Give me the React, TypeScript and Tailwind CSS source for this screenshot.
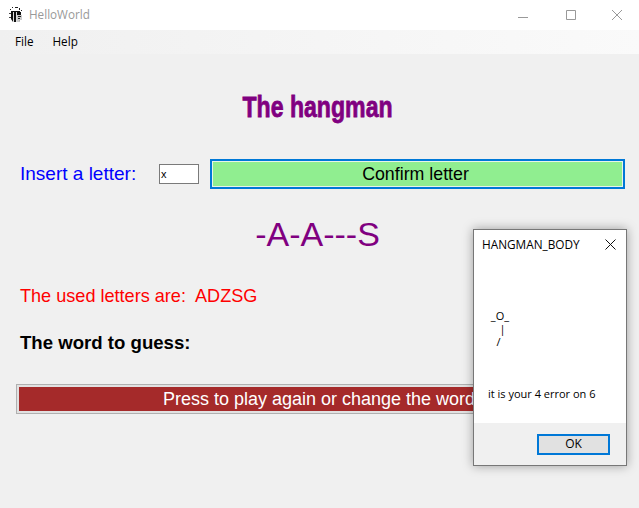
import React from 'react';

const BugIcon = () => (
  <svg width="14" height="16" viewBox="0 0 14 16" className="shrink-0">
    <path d="M3 0h1v1H3zM6 0h3v1H6zM1 2h1v1H1zM10 1h1v2h-1zM12 3h1v1h-1z" fill="#222" />
    <path d="M2 4h9v1h1v6l-2 4H4l-2-3z" fill="#111" />
    <path d="M0 6h2v1H0zM0 10h2v1H0z" fill="#444" />
    <path d="M4 5h1v10H4zM7 5h1v10H7z" fill="#ddd" />
    <path d="M8 8h5v5h-2l-1 2H8z" fill="#ccc" />
    <path d="M9 9h3v1H9zM9 11h2v1H9z" fill="#222" />
  </svg>
);

const TitleBar = () => (
  <div className="flex h-[30px] items-center bg-white pl-[9px] text-[11.7px] text-[#999]">
    <BugIcon />
    <span className="ml-[6px]">HelloWorld</span>
    <div className="ml-auto flex items-center">
      <svg width="12" height="12" viewBox="0 0 12 12" className="mr-[35px]">
        <path d="M0 8.5h10" stroke="#999" fill="none" />
      </svg>
      <svg width="12" height="12" viewBox="0 0 12 12" className="mr-[34px]">
        <path d="M1.5 1.5h9v9h-9z" stroke="#999" fill="none" />
      </svg>
      <svg width="12" height="12" viewBox="0 0 12 12" className="mr-[16px]">
        <path d="M1 1l10 10M11 1L1 11" stroke="#999" fill="none" />
      </svg>
    </div>
  </div>
);

const MenuBar = () => (
  <div className="flex h-[24px] items-center gap-[19px] bg-gradient-to-r from-[#f0f0f0] to-[#fafafa] pl-[15px] text-[11.7px] text-black">
    <span>File</span>
    <span>Help</span>
  </div>
);

const Dialog = () => (
  <div className="absolute left-[473px] top-[229px] flex h-[237px] w-[154px] flex-col border border-[#777] bg-white text-[11.8px] text-black shadow-[0_0_10px_rgba(0,0,0,0.35)]">
    <div className="flex h-[29px] items-center justify-between pl-[8px] pr-[10px]">
      <span>HANGMAN_BODY</span>
      <svg width="11" height="11" viewBox="0 0 11 11">
        <path d="M0.5 0.5l10 10M10.5 0.5l-10 10" stroke="#111" fill="none" />
      </svg>
    </div>
    <div className="flex flex-1 flex-col pl-[14px]">
      <div className="mt-[50px] h-[56px] whitespace-pre text-[11px] leading-[13px]">
        {' _O_\n    |\n   /'}
      </div>
      <div className="mt-[21px] text-[11px]">it is your 4 error on 6</div>
    </div>
    <div className="flex h-[42px] items-center justify-end bg-[#f0f0f0] pr-[16px]">
      <button className="h-[21px] w-[73px] border-2 border-[#0078d7] bg-[#e1e1e1] text-[12px] leading-none">
        OK
      </button>
    </div>
  </div>
);

export default function App() {
  return (
    <div className="relative h-[508px] w-[639px] overflow-hidden bg-[#f0f0f0] font-['Open_Sans','Noto_Sans',sans-serif]">
      <TitleBar />
      <MenuBar />
      <div className="flex flex-col font-['Liberation_Sans',Arial,sans-serif]">
        <h1 className="mt-[36px] h-[34px] pr-[3px] text-center text-[30px] font-bold leading-[34px] text-[#800080] [-webkit-text-stroke:0.8px_#800080]">
          <span className="inline-block origin-center scale-x-[0.77]">The hangman</span>
        </h1>
        <div className="mt-[35px] flex h-[30px] items-center pl-[20px]">
          <span className="mb-[1px] w-[139px] text-[19px] leading-none text-[#0000ff]">Insert a letter:</span>
          <div className="flex h-[20px] w-[40px] items-center border border-[#7a7a7a] bg-white pl-[1px] text-[11px] text-black">
            x
          </div>
          <button className="ml-[11px] h-[30px] w-[415px] border-[2px] border-[#0078d7] bg-[#90ee90] pr-[4px] pt-[2px] text-[17.8px] leading-none text-black outline outline-1 -outline-offset-3 outline-[#e8f4e8]">
            Confirm letter
          </button>
        </div>
        <div className="mt-[24px] h-[42px] pr-[4px] text-center text-[34px] leading-[42px] text-[#800080]">-A-A---S</div>
        <div className="mt-[31px] flex h-[20px] items-center pl-[20px] text-[18.1px] leading-none text-[#ff0000]">
          <span className="whitespace-pre">The used letters are:  ADZSG</span>
        </div>
        <div className="mt-[27px] h-[20px] pl-[20px] text-[18.6px] font-bold leading-[20px] text-black">
          The word to guess:
        </div>
        <div className="ml-[16px] mt-[31px] w-[604px] border border-[#b0b0b0] bg-[#e1e1e1] p-[2px]">
          <button className="block h-[24px] w-full bg-[#a52a2a] pl-[2px] text-[18px] leading-none text-white">
            Press to play again or change the word
          </button>
        </div>
      </div>
      <Dialog />
    </div>
  );
}
